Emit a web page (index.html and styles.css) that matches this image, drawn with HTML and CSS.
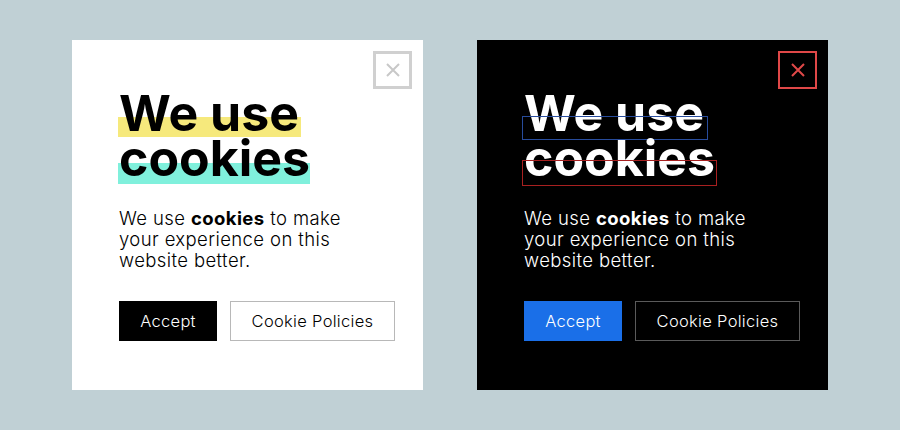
FILE: index.html
```html
<!DOCTYPE html>
<html lang="en">
<head>
<meta charset="utf-8">
<title>Cookies</title>
<link rel="stylesheet" href="styles.css">
</head>
<body>
<main class="stage">
  <section class="card card-light">
    <button class="close close-light" aria-label="Close">
      <svg viewBox="0 0 16 16" width="16" height="16"><path d="M2 2L14 14M14 2L2 14" stroke="currentColor" stroke-width="2" fill="none"/></svg>
    </button>
    <h1 class="title">
      <span class="line line-yellow">We use</span>
      <span class="line line-teal">cookies</span>
    </h1>
    <p class="text">
      <span class="tl">We use <b>cookies</b> to make</span>
      <span class="tl">your experience on this</span>
      <span class="tl">website better.</span>
    </p>
    <div class="actions">
      <button class="btn btn-accept-light">Accept</button>
      <button class="btn btn-policy-light">Cookie Policies</button>
    </div>
  </section>
  <section class="card card-dark">
    <button class="close close-dark" aria-label="Close">
      <svg viewBox="0 0 16 16" width="16" height="16"><path d="M2 2L14 14M14 2L2 14" stroke="currentColor" stroke-width="2" fill="none"/></svg>
    </button>
    <h1 class="title">
      <span class="line line-blue">We use</span>
      <span class="line line-red">cookies</span>
    </h1>
    <p class="text">
      <span class="tl">We use <b>cookies</b> to make</span>
      <span class="tl">your experience on this</span>
      <span class="tl">website better.</span>
    </p>
    <div class="actions">
      <button class="btn btn-accept-dark">Accept</button>
      <button class="btn btn-policy-dark">Cookie Policies</button>
    </div>
  </section>
</main>
</body>
</html>
```
FILE: styles.css
```css
* { box-sizing: border-box; }
html, body { margin: 0; padding: 0; }
body {
  width: 900px;
  height: 430px;
  background: #c0d0d5;
  font-family: "Inter", "Noto Sans", sans-serif;
  overflow: hidden;
}
.stage {
  display: flex;
  gap: 54px;
  padding: 40px 0 0 72px;
}
.card {
  position: relative;
  width: 351px;
  height: 350px;
  padding: 51px 20px 0 47px;
}
.card-light { background: #ffffff; color: #000; }
.card-dark { background: #000000; color: #fff; }
.close {
  position: absolute;
  top: 11px;
  right: 11px;
  width: 39px;
  height: 38px;
  padding: 0;
  background: transparent;
  display: flex;
  align-items: center;
  justify-content: center;
  cursor: pointer;
}
.close-light { border: 3px solid #d0d0d0; color: #c8c8c8; }
.close-dark { border: 2px solid #e04848; color: #e04848; }
.title {
  margin: 0;
  font-size: 50px;
  font-weight: 700;
  letter-spacing: 0;
  line-height: 45px;
}
.line {
  position: relative;
  display: block;
  width: fit-content;
  z-index: 0;
}
.line::before {
  content: "";
  position: absolute;
  z-index: -1;
}
.line-yellow::before { top: 26px; height: 20px; left: -1px; width: 183px; background: #f6e97c; }
.line-teal::before { top: 27px; height: 21px; left: -1px; width: 192px; background: #80f0dc; }
.line-blue::before { top: 25px; height: 22px; left: -2px; width: 184px; border: 1px solid #284c9c; }
.line-red::before { top: 24px; height: 24px; left: -2px; width: 193px; border: 1px solid #a82020; }
.line-blue::before, .line-red::before { z-index: 1; }
.text {
  margin: 27px 0 0;
  font-size: 18.5px;
  font-weight: 300;
  letter-spacing: 0.4px;
  line-height: 21px;
}
.tl { display: block; height: 21px; white-space: nowrap; }
.text b { font-weight: 700; }
.actions {
  display: flex;
  gap: 13px;
  margin-top: 30px;
}
.btn {
  font-family: inherit;
  font-size: 16.5px;
  font-weight: 300;
  letter-spacing: 0.3px;
  height: 40px;
  padding: 0;
  cursor: pointer;
}
.btn-accept-light { width: 98px; background: #000; color: #fff; border: none; }
.btn-policy-light { width: 165px; background: #fff; color: #000; border: 1px solid #b8b8b8; }
.btn-accept-dark { width: 98px; background: #1a6fe8; color: #fff; border: none; }
.btn-policy-dark { width: 165px; background: #000; color: #fff; border: 1px solid #5a5a5a; }
```
